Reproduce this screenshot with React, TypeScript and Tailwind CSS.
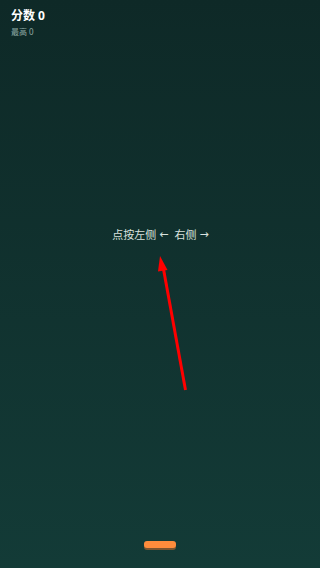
import React from "react";

export default function App() {
  return (
    <div
      className="relative w-[320px] h-[568px] overflow-hidden bg-gradient-to-b from-[#0e2927] to-[#133b37] flex flex-col"
      style={{ fontFamily: '"Noto Sans", "Noto Sans CJK SC", sans-serif' }}
    >
      <div className="pl-[11px] pt-[8px] flex flex-col">
        <div className="text-[12px] leading-[16px] font-bold text-white">分数 0</div>
        <div className="text-[8px] leading-[10px] mt-[3px] text-[#8fa9a4]">最高 0</div>
      </div>
      <div className="mt-[191px] flex justify-center items-center text-[11px] leading-[14px] text-[#d9e2df] pl-[1px] whitespace-pre">
        <span>点按左侧</span>
        <span className="font-['DejaVu_Sans',sans-serif] ml-[3px]">←</span>
        <span className="ml-[6px]">右侧</span>
        <span className="font-['DejaVu_Sans',sans-serif] ml-[3px]">→</span>
      </div>
      <svg
        className="absolute left-0 top-0"
        width="320"
        height="568"
        viewBox="0 0 320 568"
      >
        <line x1="185.5" y1="390" x2="163.3" y2="268" stroke="#ff0000" strokeWidth="3" />
        <polygon points="160,256 167.5,270 158,271.5" fill="#ff0000" />
      </svg>
      <div className="absolute left-[144px] top-[541px] w-[32px] h-[7px] rounded-[3px] bg-[#ff8c3c] shadow-[0_2px_0_#7a5530]" />
    </div>
  );
}
